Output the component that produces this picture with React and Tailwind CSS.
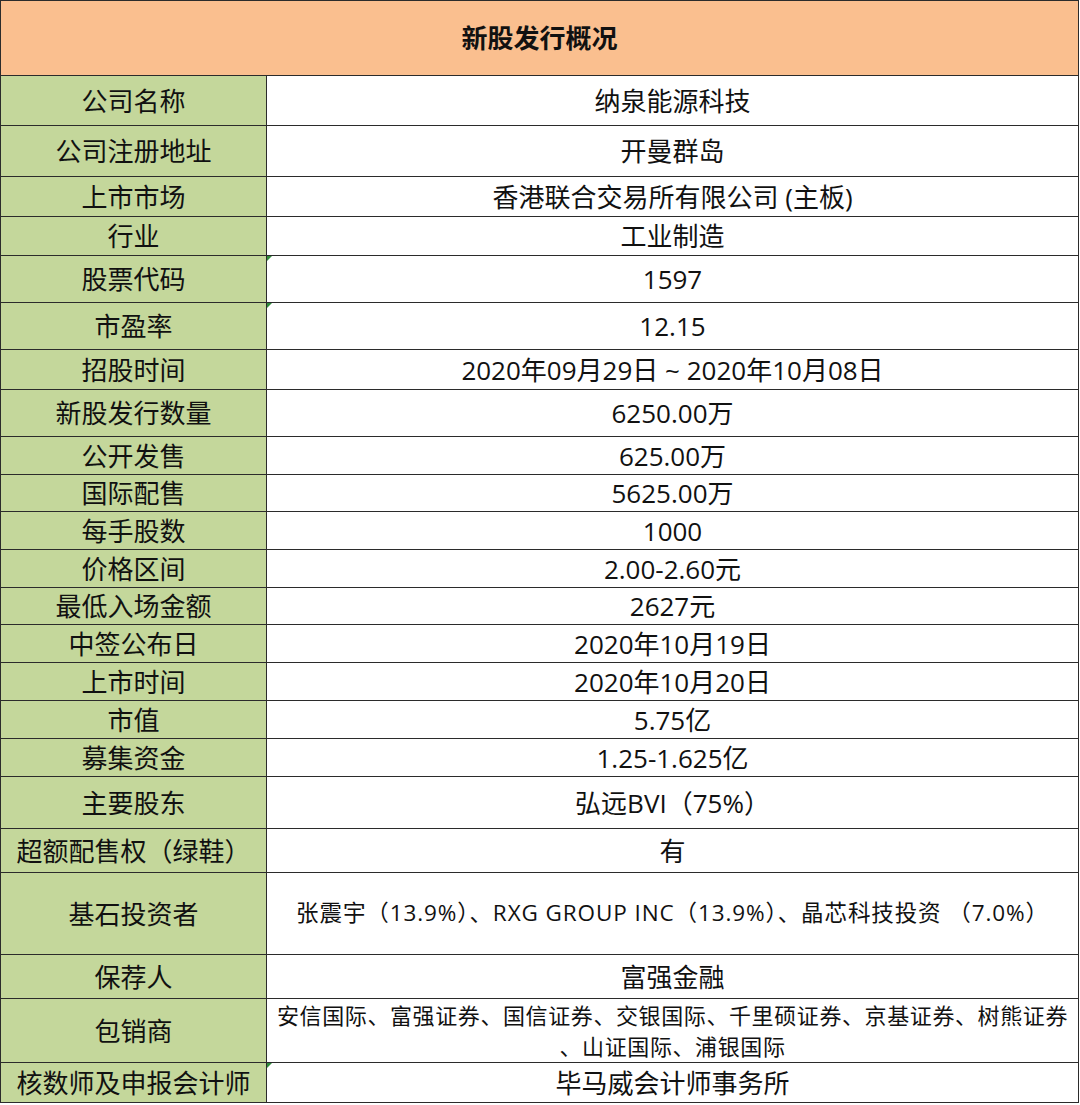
import React from 'react';

const rows = [
  { label: '公司名称', value: '纳泉能源科技', h: 'h-[50px]' },
  { label: '公司注册地址', value: '开曼群岛', h: 'h-[51px]' },
  { label: '上市市场', value: '香港联合交易所有限公司 (主板)', h: 'h-[40px]' },
  { label: '行业', value: '工业制造', h: 'h-[39px]' },
  { label: '股票代码', value: '1597', h: 'h-[47px]', mark: true },
  { label: '市盈率', value: '12.15', h: 'h-[47px]', mark: true },
  { label: '招股时间', value: '2020年09月29日 ~ 2020年10月08日', h: 'h-[40px]' },
  { label: '新股发行数量', value: '6250.00万', h: 'h-[47px]' },
  { label: '公开发售', value: '625.00万', h: 'h-[38px]' },
  { label: '国际配售', value: '5625.00万', h: 'h-[37px]' },
  { label: '每手股数', value: '1000', h: 'h-[38px]' },
  { label: '价格区间', value: '2.00-2.60元', h: 'h-[38px]' },
  { label: '最低入场金额', value: '2627元', h: 'h-[37px]' },
  { label: '中签公布日', value: '2020年10月19日', h: 'h-[38px]' },
  { label: '上市时间', value: '2020年10月20日', h: 'h-[38px]' },
  { label: '市值', value: '5.75亿', h: 'h-[38px]' },
  { label: '募集资金', value: '1.25-1.625亿', h: 'h-[38px]' },
  { label: '主要股东', value: '弘远BVI（75%）', h: 'h-[52px]' },
  { label: '超额配售权（绿鞋）', value: '有', h: 'h-[44px]' },
  {
    label: '基石投资者',
    value: '张震宇（13.9%）、RXG GROUP INC（13.9%）、晶芯科技投资 （7.0%）',
    h: 'h-[82px]',
    small: 'investors',
  },
  { label: '保荐人', value: '富强金融', h: 'h-[44px]' },
  {
    label: '包销商',
    value: (
      <>
        安信国际、富强证券、国信证券、交银国际、千里硕证券、京基证券、树熊证券
        <br />
        、山证国际、浦银国际
      </>
    ),
    h: 'h-[64px]',
    small: 'underwriters',
  },
  { label: '核数师及申报会计师', value: '毕马威会计师事务所', h: 'h-[40px]', mark: true },
];

const Mark = () => (
  <span className="absolute left-0 top-0 w-0 h-0 border-t-[5px] border-t-[#2e8b3a] border-r-[5px] border-r-transparent" />
);

export default function App() {
  return (
    <div
      className="w-[1080px] h-[1105px] bg-white text-[#111]"
      style={{ fontFamily: '"Open Sans", "Noto Sans CJK SC", sans-serif' }}
    >
      <div className="w-[1079px] border-l border-r border-t border-[#2b2b2b]">
        <div className="h-[75px] bg-[#FABF8F] border-b border-[#2b2b2b] flex items-center justify-center">
          <span className="text-[26px] font-bold">新股发行概况</span>
        </div>
        {rows.map((r, i) => (
          <div key={i} className={`${r.h} flex border-b border-[#2b2b2b]`}>
            <div className="w-[266px] shrink-0 bg-[#C4D79B] border-r border-[#2b2b2b] flex items-center justify-center text-[26px] leading-none whitespace-nowrap">
              {r.label}
            </div>
            <div className="relative flex-1 flex items-center justify-center text-center">
              {r.mark && <Mark />}
              {r.small === 'investors' ? (
                <span className="text-[22.5px] tracking-[0.9px] leading-none whitespace-nowrap">{r.value}</span>
              ) : r.small === 'underwriters' ? (
                <span className="text-[22px] tracking-[0.6px] leading-[31px] whitespace-nowrap">{r.value}</span>
              ) : (
                <span className="text-[26px] leading-none whitespace-nowrap">{r.value}</span>
              )}
            </div>
          </div>
        ))}
      </div>
    </div>
  );
}
